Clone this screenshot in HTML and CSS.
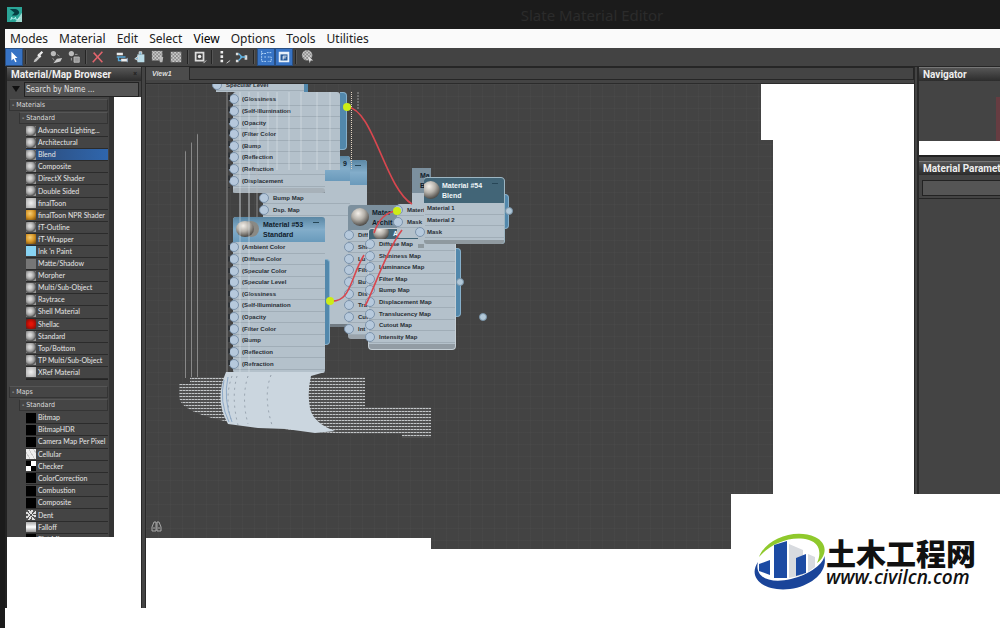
FILE: index.html
```html
<!DOCTYPE html>
<html lang="en">
<head>
<meta charset="utf-8">
<title>Slate Material Editor</title>
<link rel="stylesheet" href="styles.css">
</head>
<body>
<svg class="defs" aria-hidden="true">
  <defs>
    <radialGradient id="ball" cx=".4" cy=".3" r=".7"><stop offset="0" stop-color="#f4f0ea"/><stop offset=".5" stop-color="#b5b1aa"/><stop offset="1" stop-color="#4e4b47"/></radialGradient>
    <pattern id="hatch" width="3" height="3" patternUnits="userSpaceOnUse"><rect width="3" height="3" fill="#505050"/><rect width="3" height="1" fill="#888b8d"/><rect width="2" height="1" fill="#c3c6c8"/></pattern>
    <pattern id="check" width="4" height="4" patternUnits="userSpaceOnUse"><rect width="4" height="4" fill="#8a8a8a"/><path d="M0 0h2v2H0zM2 2h2v2H2z" fill="#ccc"/></pattern>
  </defs>
</svg>
<header class="titlebar">
  <svg class="app-icon" viewBox="0 0 16 16"><rect width="16" height="16" fill="#9fd8cf"/><path d="M0 0h16v6L9 16H0z" fill="#2ba597"/><path d="M3 2h6q4 1 4 4-1 3-5 3H5l3-3z" fill="#063e43"/><path d="M4 14l1-3 2 2 2-2 1 3M11 14l3-3" stroke="#cff" fill="none"/></svg>
  <h1 class="title">Slate Material Editor</h1>
</header>
<nav class="menubar">
  <button>Modes</button><button>Material</button><button>Edit</button><button>Select</button><button class="current">View</button><button>Options</button><button>Tools</button><button>Utilities</button>
</nav>
<div class="toolbar">
  <button class="on" aria-label="Select"><svg viewBox="0 0 16 16"><path d="M5 2v10l2.500-2 2 4 1.500-1-2-4h3z" fill="#fff"/></svg></button><i></i>
  <button aria-label="Pick material"><svg viewBox="0 0 16 16"><path d="M3 14l1-3 5-5 2 2-5 5z" fill="#c4c4c4"/><path d="M8 5l3 3M10 5l3-3" stroke="#eee" stroke-width="2.500"/></svg></button>
  <button aria-label="Put to scene"><svg viewBox="0 0 16 16"><circle cx="5" cy="4" r="3" fill="#bbb"/><path d="M9 10l6-1-2 4-8 2z" fill="#ccc"/><path d="M4 9l2 3M9 5l3 2" stroke="#999"/></svg></button>
  <button aria-label="Assign material"><svg viewBox="0 0 16 16"><circle cx="5" cy="4" r="3" fill="#bbb"/><path d="M8 8h6v6H8z" fill="#999" stroke="#bbb"/><path d="M9 5h3M5 9v3" stroke="#aaa"/></svg></button><i></i>
  <button aria-label="Delete"><svg viewBox="0 0 16 16"><path d="M3 3l10 11M13 2L2 14" stroke="#e0646c" stroke-width="1.800"/></svg></button><i class="blank"></i>
  <button aria-label="Move children"><svg viewBox="0 0 16 16"><path d="M2 3h7v3H2zM7 10h7v3H7z" fill="#eee"/><path d="M2 8h10M4 8v4h3" stroke="#58a8d8" stroke-width="1.500" fill="none"/><path d="M14 9v5" stroke="#9bd"/></svg></button>
  <button aria-label="Hide unused"><svg viewBox="0 0 16 16"><path d="M5 5h8v9H5z" fill="#b9dce8"/><path d="M7 5V2h3v3M2 10l4-3v5z" fill="#7fb7d6" stroke="#ddd"/></svg></button>
  <button aria-label="Show map"><svg viewBox="0 0 16 16"><path d="M1 1h12v11H1z" fill="url(#check)"/><path d="M10 8h4l-1 6h-3z" fill="#bbb"/></svg></button>
  <button aria-label="Show background"><svg viewBox="0 0 16 16"><path d="M2 2h12v12H2z" fill="url(#check)"/></svg></button><i></i>
  <button aria-label="Material ID"><svg viewBox="0 0 16 16"><path d="M3 3h9v9H3z" fill="none" stroke="#ddd" stroke-width="2"/><circle cx="7.500" cy="7.500" r="2" fill="#eee"/><path d="M12 15l3-3" stroke="#ddd"/></svg></button><i></i>
  <button aria-label="Layout all"><svg viewBox="0 0 16 16"><path d="M4 1h3v3H4zM4 6h3v3H4zM4 11h3v3H4z" fill="#eee"/><path d="M11 15l4-3" stroke="#ddd"/></svg></button>
  <button aria-label="Layout children"><svg viewBox="0 0 16 16"><path d="M1 3h3v3H1zM1 11h3v3H1zM11 6h3v5h-3z" fill="#ddd"/><path d="M4 4l4 4-4 4M6 8h6" stroke="#62b5e5" stroke-width="1.500" fill="none"/></svg></button><i></i>
  <button class="on" aria-label="Browser"><svg viewBox="0 0 16 16"><path d="M3 1v12h5M3 4h5M9 3h5M10 8h4v5h-4M6 8h2" stroke="#bfe0ff" stroke-dasharray="2 1" fill="none"/></svg></button>
  <button class="on" aria-label="Parameters"><svg viewBox="0 0 16 16"><path d="M2 2h12v12H2z" fill="#e8f1fb"/><path d="M4 5h8v7H4z" fill="#275a99"/><path d="M7 11V7h4M7 9h3" stroke="#fff" fill="none"/></svg></button><i></i>
  <button aria-label="Select by material"><svg viewBox="0 0 16 16"><circle cx="7" cy="6" r="6" fill="url(#check)"/><path d="M8 7l6 5-3 0-1 3z" fill="#ddd"/></svg></button>
</div>
<main class="workspace">
  <aside class="browser">
    <h2 class="panel-head"><span>Material/Map Browser</span><button class="close" aria-label="Close">×</button></h2>
    <div class="search"><button class="drop" aria-label="Browser options"></button><input type="text" aria-label="Search by Name" placeholder="Search by Name ..."></div>
    <div class="tree">
      <h3 class="group">- Materials</h3>
      <h4 class="group sub">- Standard</h4>
      <ul class="list materials">
        <li><b class="ic"></b>Advanced Lighting...</li><li><b class="ic"></b>Architectural</li><li class="selected"><b class="ic"></b>Blend</li><li><b class="ic"></b>Composite</li><li><b class="ic"></b>DirectX Shader</li><li><b class="ic"></b>Double Sided</li><li><b class="ic pale"></b>finalToon</li><li><b class="ic gold"></b>finalToon NPR Shader</li><li><b class="ic"></b>fT-Outline</li><li><b class="ic gold"></b>fT-Wrapper</li><li><b class="ic cyan"></b>Ink 'n Paint</li><li><b class="ic matte"></b>Matte/Shadow</li><li><b class="ic"></b>Morpher</li><li><b class="ic"></b>Multi/Sub-Object</li><li><b class="ic"></b>Raytrace</li><li><b class="ic"></b>Shell Material</li><li><b class="ic red"></b>Shellac</li><li><b class="ic"></b>Standard</li><li><b class="ic"></b>Top/Bottom</li><li><b class="ic"></b>TP Multi/Sub-Object</li><li><b class="ic pale"></b>XRef Material</li>
      </ul>
      <h3 class="group second">- Maps</h3>
      <h4 class="group sub">- Standard</h4>
      <ul class="list maps">
        <li><b class="ic black"></b>Bitmap</li><li><b class="ic black"></b>BitmapHDR</li><li><b class="ic black"></b>Camera Map Per Pixel</li><li><b class="ic cell"></b>Cellular</li><li><b class="ic checker"></b>Checker</li><li><b class="ic black"></b>ColorCorrection</li><li><b class="ic black"></b>Combustion</li><li><b class="ic black"></b>Composite</li><li><b class="ic dent"></b>Dent</li><li><b class="ic fall"></b>Falloff</li><li><b class="ic black"></b>Flat Mirror</li>
      </ul>
    </div>
  </aside>
  <div class="divider"></div>
  <section class="view">
    <div class="tabs"><button class="tab">View1</button></div>
    <div class="canvas">
      <div class="streaks left"></div>
      <div class="node n-back1"><div class="node-head"><strong>9</strong></div>
        <ul><li>Bump Map</li><li>Dsp. Map</li></ul></div>
      <div class="node n-back2"><div class="node-head"><span class="min"></span></div></div>
      <div class="node n-strip"><ul><li>Specular Level</li></ul></div>
      <div class="out o-52"></div>
      <div class="node n-52"><ul class="smear"><li>(Glossiness</li><li>(Self-Illumination</li><li>(Opacity</li><li>(Filter Color</li><li>(Bump</li><li>(Reflection</li><li>(Refraction</li><li>(Displacement</li></ul></div>
      <div class="node n-arch1"><div class="node-head gray"><svg class="ball" viewBox="0 0 16 16"><circle cx="8" cy="8" r="8" fill="url(#ball)"/></svg><strong>Mater<br>Archit</strong></div>
        <ul><li>Diff</li><li>Shi</li><li>Lu</li><li>Filt</li><li>Bu</li><li>Dis</li><li>Tra</li><li>Cut</li><li>Int</li></ul></div>
      <div class="out o-arch"></div>
      <div class="node n-arch2"><div class="node-head dark"><svg class="ball" viewBox="0 0 16 16"><circle cx="8" cy="3" r="7" fill="url(#ball)"/></svg><strong>Archit</strong></div>
        <ul><li>Diffuse Map</li><li>Shininess Map</li><li>Luminance Map</li><li>Filter Map</li><li>Bump Map</li><li>Displacement Map</li><li>Translucency Map</li><li>Cutout Map</li><li>Intensity Map</li></ul></div>
      <div class="out o-53"></div>
      <div class="node n-53"><div class="node-head"><svg class="ball" viewBox="0 0 24 16"><ellipse cx="15" cy="8" rx="8" ry="8" fill="#8a8984"/><ellipse cx="9" cy="8" rx="9" ry="8" fill="url(#ball)"/></svg><strong>Material #53<br>Standard</strong><span class="min"></span></div>
        <ul class="smear"><li>(Ambient Color</li><li>(Diffuse Color</li><li>(Specular Color</li><li>(Specular Level</li><li>(Glossiness</li><li>(Self-Illumination</li><li>(Opacity</li><li>(Filter Color</li><li>(Bump</li><li>(Reflection</li><li>(Refraction</li></ul></div>
      <div class="node n-blend1"><div class="node-head gray"><strong>Ma<br>Bl</strong></div></div>
      <div class="node n-blend1b"><ul><li>Materia</li><li>Mask</li></ul></div>
      <div class="out o-blend"></div>
      <div class="node n-blend2"><div class="node-head dark"><svg class="ball" viewBox="0 0 16 16"><circle cx="6" cy="8" r="8" fill="url(#ball)"/></svg><strong>Material #54<br>Blend</strong><span class="min"></span></div>
        <ul><li>Material 1</li><li>Material 2</li><li>Mask</li></ul></div>
      <svg class="wires" viewBox="146 84 768 465" width="768" height="465" aria-hidden="true">
        <path d="M227 92V372M240 192V217M249 192V217M257 169V217" stroke="#bbb" opacity=".6"/>
        <path d="M229 95V188M229 245V370" stroke="#2d3135" stroke-width="2" stroke-dasharray="5 6.500"/>
        <path d="M240 92V372M249 92V372M258 92V170M268 92V170M277 92V170M289 92V170M301 92V170M317 92V170M330 92V170" stroke="#e1e9ee" opacity=".5"/>
        <path d="M351.500 92V170" stroke="#e4d4c2" stroke-dasharray="1 1"/><path d="M358 92v17" stroke="#999" stroke-dasharray="2 1"/>
        <path d="M190 377H365V407H431V438H402V434H347L300 431 235 423Q183 414 179 398V384H190z" fill="url(#hatch)"/>
        <path d="M226 372H325L311 376Q307 393 310 408 313 423 335 431L315 433 286 429 258 428 228 424Q214 400 226 372z" fill="#cbd6df"/>
        <path d="M232 376q-8 22 0 47M237 376q-6 22 1 49M248 376q-7 22 0 48M271 375q-8 21 1 50" fill="none" stroke="#6f7c88" stroke-dasharray="2 4" opacity=".6"/>
        <path d="M224 380q-5 22 5 42M228 377q-5 22 4 45" fill="none" stroke="#8faac8"/>
        <g fill="none" stroke="#d7474f" stroke-width="1.600"><path d="M347 107C373 108 385 188 412 204M330 301C351 303 350 278 364 255M374 233Q381 212 397 211M365 306C373 293 385 252 402 230"/></g>
        <g fill="#cdec16"><circle cx="347" cy="107" r="4"/><circle cx="330" cy="301" r="4"/><circle cx="397" cy="211" r="4"/></g>
        <g fill="#b2c8d8" stroke="#7792a7"><circle cx="460" cy="282" r="3.500"/><circle cx="509" cy="211" r="3.500"/><circle cx="483" cy="317" r="3.500"/></g>
        <path d="M152 531v-4l2-5h2v9h-4zm5 0v-9h2l2 5v4h-4zM153 528h2M158 528h2" fill="none" stroke="#aaa"/>
      </svg>
    </div>
  </section>
  <div class="divider short"></div>
  <aside class="side">
    <h2 class="panel-head">Navigator</h2>
    <div class="navigator"><div class="nav-view"></div></div>
    <h2 class="panel-head">Material Parameter Editor</h2>
    <div class="params"><select aria-label="Parameters"><option></option></select></div>
    <div class="empty"></div>
  </aside>
</main>
<footer class="brand">
  <svg class="brand-mark" viewBox="0 0 72 60"><path d="M5 25C12 6 42-4 61 5 74 11 73 24 63 31 68 20 65 11 55 8 38 3 17 11 5 25z" fill="#8fc92c"/><path d="M4 30C0 46 17 52 37 47 58 42 72 29 70 23 75 39 58 54 36 57 10 60-7 46 4 30z" fill="#1a4499"/><path d="M35 12l14 6v25l-14 3z" fill="#d8dbdf"/><path d="M54 22l7 3v10l-7 5z" fill="#d8dbdf"/><path d="M20 13l13-4v37H20z" fill="#1c4ba3"/><path d="M5 32l11-4v15L5 39z" fill="#1c4ba3"/><path d="M42 26l10-4v19l-10 3z" fill="#1c4ba3"/></svg>
  <div class="brand-text"><strong lang="zh">土木工程网</strong><a href="#">www.civilcn.com</a></div>
</footer>
</body>
</html>
```
FILE: styles.css
```css
* { box-sizing: border-box; }
body {
  margin: 0;
  min-height: 100vh;
  position: relative;
  border-left: 5px solid #1b1b1b;
  background: #fff;
  color: #ddd;
  font-family: "Liberation Sans", Arial, sans-serif;
  overflow: hidden;
}
h1, h2, h3, h4, ul { margin: 0; padding: 0; list-style: none; }
button { border: 0; padding: 0; background: none; color: inherit; font: inherit; }
.defs { position: absolute; width: 0; height: 0; }

.titlebar { display: flex; align-items: center; height: 29px; background: #1b1b1b; padding-left: 2px; }
.app-icon { width: 15px; height: 15px; }
.title { flex: 1; padding-left: 162px; text-align: center; font: 15px/28px "Noto Sans", sans-serif; color: #2b2b2b; }

.menubar { display: flex; gap: 11px; height: 19px; padding-left: 5px; background: #fafafa; color: #222; font: 12px/19px "Noto Sans", sans-serif; }
.menubar .current { color: #000; }

.toolbar { display: flex; height: 19px; background: #434343; border-bottom: 1px solid #262626; }
.toolbar button { width: 18px; height: 18px; display: grid; place-items: center; }
.toolbar svg { width: 14px; height: 14px; }
.toolbar .on { background: #3773c4; border: 1px solid #2a4f82; }
.toolbar i { width: 2px; margin: 2px; border-left: 1px solid #242424; border-right: 1px solid #555; }
.toolbar .blank { border: 0; }

.workspace { display: grid; grid-template-columns: 136px 5px 1fr 4px 82px; align-items: start; }
.browser { border-left: 2px solid #222; height: 541px; background: #fff; }
.panel-head {
  display: flex; justify-content: space-between; align-items: center;
  height: 14px; padding: 0 4px; overflow: hidden; white-space: nowrap;
  background: linear-gradient(#555, #2c2c2c); border-top: 1px solid #777;
  font: bold 10px/13px Roboto, sans-serif; color: #eee;
}
.close { font-size: 7px; color: #222; }
.search { display: flex; height: 16px; align-items: center; background: #444; padding-right: 2px; }
.drop { width: 17px; height: 14px; display: grid; place-items: center; }
.drop::before { content: ""; border: 4px solid transparent; border-top: 6px solid #111; border-bottom: 0; }
.search input { flex: 1; min-width: 0; height: 15px; border: 1px solid #222; padding: 0 1px; background: #555; color: #ddd; font: 8px "DejaVu Sans Condensed", sans-serif; }
.search input::placeholder { color: #e0e0e0; opacity: 1; }
.tree { width: 107px; height: 440px; overflow: hidden; padding: 2px 1px 0 2px; background: #444; border-right: 5px solid #333; }
.group { height: 12px; margin-bottom: 1px; padding-left: 2px; border: 1px solid #343434; border-top-color: #555; background: #454545; font: 7px/10px "DejaVu Sans Condensed", sans-serif; color: #ddd; }
.sub { margin-left: 10px; }
.second { margin-top: 6px; }
.list { display: grid; grid-auto-rows: 1fr; margin-left: 17px; }
.materials { min-height: 255px; border-bottom: 1px solid #252525; }
.maps { min-height: 134px; }
.list li { display: flex; align-items: center; gap: 2px; min-height: 0; border-bottom: 1px solid #2b2b2b; font: 7px/11px Lato, sans-serif; color: #e6e6e6; white-space: nowrap; }
.list .selected { background: linear-gradient(90deg, #2d4b78, #2f66ad); }
.ic { width: 10px; height: 10px; flex: none; background: radial-gradient(circle at 40% 40%, #d8d8d8 0 15%, #999 50%, #555 70%, #999 85%); }
.pale { background: radial-gradient(circle, #f0f0f0, #aaa); }
.gold { background: radial-gradient(circle at 40% 35%, #f7cf76, #d49324 50%, #5e3c0d); }
.cyan { background: #88d3f3; }
.matte { background: #777; }
.red { background: radial-gradient(circle, #e31408 20%, #a70d05 65%, #333); }
.black { background: #000; }
.cell { background: repeating-linear-gradient(60deg, #eee 0 3px, #ccc 3px 4px); }
.checker { background: conic-gradient(#fff 25%, #000 0 50%, #fff 0 75%, #000 0); }
.dent { background: repeating-conic-gradient(#ddd 0 7%, #555 7% 13%); }
.fall { background: linear-gradient(#aaa, #fff 50%, #999); }

.divider { height: 541px; background: #444; border-left: 1px solid #292929; border-right: 1px solid #292929; }
.short { height: 427px; }

.view { min-width: 0; }
.tabs { height: 17px; padding-bottom: 3px; background: #444; border-bottom: 1px solid #2b2b2b; display: flex; }
.tabs::after { content: ""; flex: 1; border: 1px solid #262626; }
.tab { width: 43px; padding-left: 6px; text-align: left; background: #4c4c4c; font: italic bold 7px/11px "Liberation Sans", sans-serif; }
.canvas {
  position: relative; height: 465px; overflow: hidden;
  background: repeating-linear-gradient(90deg, rgba(255,255,255,.02) 0 1px, transparent 1px 12px), repeating-linear-gradient(rgba(255,255,255,.02) 0 1px, transparent 1px 12px), #434343;
  clip-path: polygon(0 0, 615px 0, 615px 56px, 627px 56px, 627px 410px, 585px 410px, 585px 465px, 285px 465px, 285px 454px, 0 454px);
}
.wires { position: absolute; left: 0; top: 0; }
.streaks { position: absolute; left: 39px; top: 48px; width: 14px; height: 246px; background: repeating-linear-gradient(90deg, #888 0 1px, transparent 1px 6px); clip-path: polygon(0 8%, 100% 0, 100% 100%, 0 100%); }

.node { position: absolute; background: #b4c1cb; color: #272d34; border-radius: 3px; }
.node-head { display: flex; position: relative; height: 25px; padding: 3px; gap: 3px; background: linear-gradient(#5b87a4, #83adca 50%, #6a9abb); color: #10202c; border-radius: 3px 3px 0 0; overflow: hidden; }
.node-head strong { font: bold 7px/10px "Liberation Sans", sans-serif; white-space: nowrap; }
.node .gray { background: #7c909e; }
.node .dark { background: #426577; color: #f0f5f8; }
.ball { height: 18px; width: 18px; flex: none; }
.min { position: absolute; right: 6px; top: 5px; width: 6px; height: 1px; background: #274657; }
.node ul { display: grid; grid-auto-rows: 1fr; }
.node li { display: flex; align-items: center; gap: 4px; min-height: 0; white-space: nowrap; font: bold 6px/8px "Liberation Sans", sans-serif; border-bottom: 1px solid #a0adb7; }
.node li::before { content: ""; width: 8px; height: 8px; margin-left: -4px; flex: none; border: 1px solid #7c93ab; border-radius: 50%; background: #b6c9dc; }
.out { position: absolute; background: #5288ac; border: 1px solid #86afca; border-left: 0; border-radius: 0 4px 4px 0; }

.n-strip { left: 70px; top: -4px; width: 92px; height: 12px; border-right: 4px solid #5288ac; border-radius: 0; }
.n-52 { left: 87px; top: 8px; width: 107px; height: 101px; clip-path: polygon(-6px 0, 100% 0, 100% 78px, 92px 78px, 92px 100%, -6px 100%); }
.n-52::after { content: ""; position: absolute; left: 0; top: 96px; width: 92px; height: 5px; border-bottom: 2px solid #717c85; border-radius: 3px; background: #a7b1b9; }
.n-52 ul { height: 95px; padding-top: 2px; }
.o-52 { left: 194px; top: 8px; width: 7px; height: 58px; }
.n-back1 { left: 117px; top: 72px; width: 87px; height: 171px; border-bottom: 3px solid #727c84; }
.n-back1 .node-head { justify-content: flex-end; }
.n-back1 ul { height: 24px; margin-top: 11px; }
.n-back2 { left: 204px; top: 76px; width: 17px; height: 110px; border-radius: 0 3px 0 0; }
.n-arch1 { left: 202px; top: 121px; width: 60px; height: 134px; border-bottom: 4px solid #9ba4ab; }
.n-arch1 ul { height: 105px; }
.n-arch2 { left: 223px; top: 145px; width: 86px; height: 120px; border-bottom: 5px solid #929ca4; box-shadow: 0 0 0 1px #c4ced5; }
.n-arch2 .node-head { height: 10px; padding: 0 3px; }
.n-arch2 ul { height: 104px; }
.o-arch { left: 309px; top: 164px; width: 6px; height: 69px; }
.n-53 { left: 87px; top: 133px; width: 92px; height: 156px; }
.n-53 .ball { width: 24px; }
.n-53 ul { height: 128px; }
.o-53 { left: 179px; top: 175px; width: 5px; height: 86px; }
.smear li { gap: 3px; }
.n-blend1 { left: 266px; top: 84px; width: 19px; height: 40px; border-radius: 0; }
.n-blend1 .node-head { padding: 3px 0 0 8px; border-radius: 0; }
.n-blend1b { left: 251px; top: 120px; width: 27px; height: 34px; }
.n-blend1b ul { height: 24px; }
.n-blend2 { left: 278px; top: 94px; width: 80px; height: 66px; border-bottom: 4px solid #8f999f; box-shadow: 1px 0 0 #9db6c3, 0 -1px 0 #9db6c3; }
.n-blend2::before { content: ""; position: absolute; left: -6px; top: 48px; width: 6px; height: 18px; background: #b4c1cb; border-bottom: 4px solid #8f999f; }
.n-blend2 .node-head { padding-left: 0; gap: 0; }
.n-blend2 ul { height: 35px; padding-left: 1px; position: relative; }
.n-blend2 li { gap: 2px; }
.n-blend2 li::before { margin-left: -10px; }
.n-blend2 li:not(:last-child)::before { opacity: 0; }
.o-blend { left: 358px; top: 110px; width: 5px; height: 35px; }

.side { height: 427px; overflow: hidden; display: flex; flex-direction: column; background: #444; border-left: 1px solid #292929; }
.side .panel-head { flex: none; }
.navigator { height: 76px; padding-top: 16px; border-bottom: 2px solid #222; background: #444; }
.navigator::after { content: ""; display: block; height: 14px; background: #fff; }
.nav-view { height: 44px; margin-left: 77px; border-left: 4px solid #663c41; }
.side .panel-head + .params { margin-top: 4px; }
.navigator + .panel-head { margin-top: 4px; }
.params { height: 20px; padding-left: 3px; border-bottom: 1px solid #252525; }
.params select { appearance: none; width: 100%; height: 16px; border: 1px solid #222; border-right: 0; border-radius: 0; background: #555; }
.empty { flex: 1; }

.brand { position: absolute; right: 24px; bottom: 36px; display: flex; align-items: center; }
.brand-mark { width: 72px; height: 60px; }
.brand-text { display: flex; flex-direction: column; color: #111; }
.brand-text strong { font: 900 30px/30px "Noto Sans CJK SC", sans-serif; }
.brand-text a { color: #111; text-decoration: none; font: italic 600 19px/20px "Open Sans", sans-serif; }
```
